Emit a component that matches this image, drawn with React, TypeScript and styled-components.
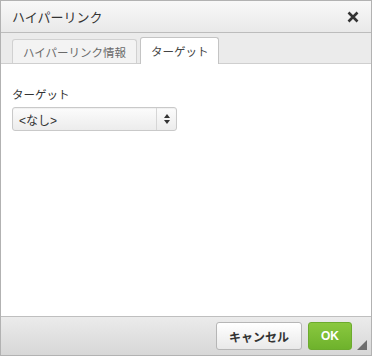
import styled, { createGlobalStyle } from "styled-components";

const Global = createGlobalStyle`
  html, body {
    margin: 0;
    padding: 0;
    background: #fff;
  }
  body {
    font-family: "Liberation Sans", "Noto Sans CJK JP", sans-serif;
  }
`;

const Dialog = styled.div`
  width: 372px;
  height: 356px;
  box-sizing: border-box;
  border: 1px solid #b2b2b2;
  display: flex;
  flex-direction: column;
  background: #fff;
`;

const TitleBar = styled.div`
  height: 32px;
  box-sizing: border-box;
  display: flex;
  align-items: center;
  justify-content: space-between;
  padding: 0 12px 0 11px;
  background: linear-gradient(#f8f8f8, #e9e9e9);
  border-bottom: 1px solid #bcbcbc;
`;

const Title = styled.div`
  font-size: 13px;
  color: #333;
`;

const Close = styled.div`
  width: 12px;
  height: 12px;
  display: flex;
`;

const TabStrip = styled.div`
  height: 31px;
  box-sizing: border-box;
  display: flex;
  align-items: flex-end;
  gap: 3px;
  padding: 0 0 0 11px;
  background: #ebebeb;
  border-bottom: 1px solid #cfcfcf;
`;

const Tab = styled.div<{ $active?: boolean }>`
  height: ${(p) => (p.$active ? 27 : 24)}px;
  box-sizing: border-box;
  padding: 0 ${(p) => (p.$active ? 9 : 10)}px 0 10px;
  display: flex;
  align-items: center;
  font-size: 11.5px;
  color: ${(p) => (p.$active ? "#444" : "#6a6a6a")};
  background: ${(p) => (p.$active ? "#fff" : "#f3f3f3")};
  border: 1px solid ${(p) => (p.$active ? "#c4c4c4" : "#d1d1d1")};
  border-bottom: none;
  border-radius: 3px 3px 0 0;
  margin-bottom: ${(p) => (p.$active ? -1 : 0)}px;
`;

const Body = styled.div`
  flex: 1;
  padding: 24px 11px 0;
  display: flex;
  flex-direction: column;
  align-items: flex-start;
`;

const Label = styled.div`
  font-size: 11.5px;
  line-height: 14px;
  color: #333;
  margin-bottom: 5px;
`;

const Select = styled.div`
  width: 165px;
  height: 24px;
  box-sizing: border-box;
  display: flex;
  border: 1px solid #c9c9c9;
  border-radius: 3px;
  background: linear-gradient(#fcfcfc, #ececec);
  box-shadow: inset 0 1px 1px rgba(0, 0, 0, 0.05);
`;

const SelectText = styled.div`
  flex: 1;
  display: flex;
  align-items: center;
  padding-left: 6px;
  font-size: 12px;
  color: #333;
`;

const SelectArrow = styled.div`
  width: 19px;
  border-left: 1px solid #d6d6d6;
  display: flex;
  align-items: center;
  justify-content: center;
`;

const Footer = styled.div`
  height: 39px;
  box-sizing: border-box;
  border-top: 1px solid #bfbfbf;
  background: linear-gradient(#ebebeb, #d7d7d7);
  display: flex;
  align-items: center;
  justify-content: flex-end;
  gap: 6px;
  padding: 0 19px 0 0;
  position: relative;
`;

const Button = styled.div<{ $ok?: boolean }>`
  height: 28px;
  box-sizing: border-box;
  padding: 0 12px;
  display: flex;
  align-items: center;
  font-size: 12px;
  font-weight: bold;
  border-radius: 3px;
  color: ${(p) => (p.$ok ? "#fff" : "#333")};
  background: ${(p) => (p.$ok ? "linear-gradient(#8ac83f, #6eb22c)" : "linear-gradient(#fff, #e9e9e9)")};
  border: 1px solid ${(p) => (p.$ok ? "#6cab2d" : "#b6b6b6")};
`;

const Grip = styled.div`
  position: absolute;
  right: 4px;
  bottom: 5px;
  width: 0;
  height: 0;
  border-left: 10px solid transparent;
  border-bottom: 10px solid #6e6e6e;
`;

export default function App() {
  return (
    <>
      <Global />
      <Dialog>
        <TitleBar>
          <Title>ハイパーリンク</Title>
          <Close>
            <svg width="12" height="12" viewBox="0 0 12 12">
              <path d="M1.5 1.5 L10.5 10.5 M10.5 1.5 L1.5 10.5" stroke="#333" strokeWidth="2.6" />
            </svg>
          </Close>
        </TitleBar>
        <TabStrip>
          <Tab>ハイパーリンク情報</Tab>
          <Tab $active>ターゲット</Tab>
        </TabStrip>
        <Body>
          <Label>ターゲット</Label>
          <Select>
            <SelectText>&lt;なし&gt;</SelectText>
            <SelectArrow>
              <svg width="6" height="10" viewBox="0 0 6 10">
                <path d="M3 0 L6 4 L0 4 Z M0 6 L6 6 L3 10 Z" fill="#333" />
              </svg>
            </SelectArrow>
          </Select>
        </Body>
        <Footer>
          <Button>キャンセル</Button>
          <Button $ok>OK</Button>
          <Grip />
        </Footer>
      </Dialog>
    </>
  );
}
